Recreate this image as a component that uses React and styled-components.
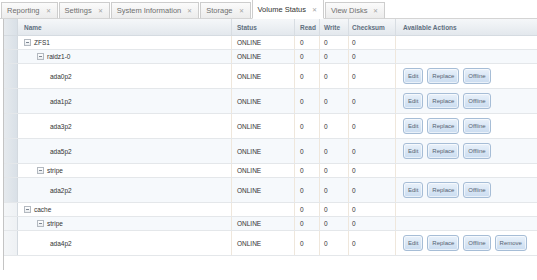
import React from "react";
import styled, { createGlobalStyle } from "styled-components";

const GlobalStyle = createGlobalStyle`
  html, body {
    margin: 0;
    padding: 0;
    background: #ffffff;
    font-family: "Liberation Sans", Arial, sans-serif;
  }
`;

const Page = styled.div`
  width: 537px;
  height: 280px;
  overflow: hidden;
  display: flex;
  flex-direction: column;
  background: #fff;
`;

const TabBar = styled.div`
  display: flex;
  align-items: flex-end;
  gap: 1px;
  height: 19px;
  padding-left: 1px;
  border-bottom: 1px solid #d4d4d4;
  box-sizing: border-box;
`;

const Tab = styled.div`
  display: flex;
  align-items: center;
  gap: 6px;
  height: ${(p) => (p.$active ? "20px" : "17px")};
  margin-bottom: -1px;
  padding: 0 6px 0 5px;
  box-sizing: border-box;
  border: 1px solid #cdcdcd;
  border-bottom: ${(p) => (p.$active ? "1px solid #fff" : "1px solid #d4d4d4")};
  background: ${(p) =>
    p.$active ? "#ffffff" : "linear-gradient(#fbfbfb, #ececec)"};
  color: ${(p) => (p.$active ? "#333" : "#6f6f6f")};
  font-size: 7.5px;
  white-space: nowrap;
`;

const Close = styled.span`
  color: #a3a3a3;
  font-size: 6px;
`;

const Body = styled.div`
  flex: 1;
  margin-left: 3px;
  border-left: 1px solid #c4c4c4;
  margin-bottom: 10px;
`;

const Row = styled.div`
  display: grid;
  grid-template-columns: 14px 214px 63px 25px 29px 47px 1fr;
  height: ${(p) => p.$h}px;
  box-sizing: border-box;
  border-bottom: 1px solid #e4e7ea;
  background: ${(p) => (p.$alt ? "#f6f9fc" : "#ffffff")};
  font-size: 6.5px;
  color: #333;
`;

const HeaderRow = styled(Row)`
  background: linear-gradient(#f5f7f9, #e3e8ed);
  border-bottom: 1px solid #d5dbe1;
  color: #5f6f80;
  font-weight: bold;
  font-size: 6.5px;
`;

const Gutter = styled.div`
  background: ${(p) =>
    p.$light
      ? "linear-gradient(90deg, #f4f6f8, #eef1f4)"
      : "linear-gradient(90deg, #e6eaee, #d9e0e7)"};
  border-right: 1px solid #d3d9df;
`;

const Cell = styled.div`
  display: flex;
  align-items: center;
  padding-left: ${(p) => p.$pad ?? 5}px;
  border-right: 1px solid ${(p) => (p.$head ? "#d8dde2" : "#efe7dc")};
  white-space: nowrap;
  overflow: hidden;
  gap: 3px;
`;

const ActionCell = styled(Cell)`
  border-right: none;
  gap: 4px;
  padding-left: 7px;
`;

const Expander = styled.span`
  position: relative;
  width: 7px;
  height: 7px;
  box-sizing: border-box;
  border: 1px solid #b3b9c0;
  background: linear-gradient(#ffffff, #e9ecef);
  flex-shrink: 0;
  &::after {
    content: "";
    position: absolute;
    left: 1px;
    right: 1px;
    top: 2px;
    height: 1px;
    background: #7d8793;
  }
`;

const Button = styled.button`
  height: 16px;
  padding: 0 4px;
  font-family: "Liberation Sans", Arial, sans-serif;
  font-size: 6px;
  color: #556271;
  border: 1px solid #a6bdd6;
  border-radius: 3px;
  background: linear-gradient(#e9f1fa, #cadcf0);
  box-shadow: inset 0 0 0 1px rgba(255, 255, 255, 0.6);
  cursor: pointer;
`;

const rows = [
  { name: "ZFS1", level: 0, group: true, status: "ONLINE" },
  { name: "raidz1-0", level: 1, group: true, status: "ONLINE" },
  { name: "ada0p2", level: 2, status: "ONLINE", actions: ["Edit", "Replace", "Offline"] },
  { name: "ada1p2", level: 2, status: "ONLINE", actions: ["Edit", "Replace", "Offline"] },
  { name: "ada3p2", level: 2, status: "ONLINE", actions: ["Edit", "Replace", "Offline"] },
  { name: "ada5p2", level: 2, status: "ONLINE", actions: ["Edit", "Replace", "Offline"] },
  { name: "stripe", level: 1, group: true, status: "ONLINE" },
  { name: "ada2p2", level: 2, status: "ONLINE", actions: ["Edit", "Replace", "Offline"] },
  { name: "cache", level: 0, group: true, status: "", light: true },
  { name: "stripe", level: 1, group: true, status: "ONLINE", light: true },
  {
    name: "ada4p2",
    level: 2,
    status: "ONLINE",
    light: true,
    actions: ["Edit", "Replace", "Offline", "Remove"],
  },
];

const tabs = [
  "Reporting",
  "Settings",
  "System Information",
  "Storage",
  "Volume Status",
  "View Disks",
];

export default function App() {
  return (
    <Page>
      <GlobalStyle />
      <TabBar>
        {tabs.map((t) => (
          <Tab key={t} $active={t === "Volume Status"}>
            {t}
            <Close>✕</Close>
          </Tab>
        ))}
      </TabBar>
      <Body>
        <HeaderRow $h={17}>
          <Gutter />
          <Cell $head $pad={6}>Name</Cell>
          <Cell $head>Status</Cell>
          <Cell $head>Read</Cell>
          <Cell $head $pad={4}>Write</Cell>
          <Cell $head $pad={3}>Checksum</Cell>
          <ActionCell>Available Actions</ActionCell>
        </HeaderRow>
        {rows.map((r, i) => (
          <Row key={i} $h={r.actions ? 25 : 14} $alt={i % 2 === 1}>
            <Gutter $light={r.light} />
            <Cell $pad={6 + r.level * 13}>
              {r.group && <Expander />}
              {r.name}
            </Cell>
            <Cell>{r.status}</Cell>
            <Cell>0</Cell>
            <Cell $pad={4}>0</Cell>
            <Cell $pad={3}>0</Cell>
            <ActionCell>
              {r.actions &&
                r.actions.map((a) => <Button key={a}>{a}</Button>)}
            </ActionCell>
          </Row>
        ))}
      </Body>
    </Page>
  );
}
